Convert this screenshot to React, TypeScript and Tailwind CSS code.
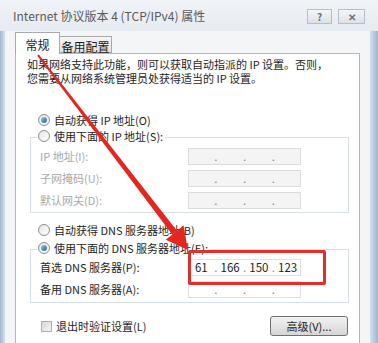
import React from 'react';

const FONT = { fontFamily: '"Noto Sans CJK SC", "Noto Sans", sans-serif' };

function Radio({ checked }: { checked?: boolean }) {
  return (
    <span className="relative flex h-[12px] w-[12px] shrink-0 items-center justify-center rounded-full border border-[#8e8f8f] bg-gradient-to-br from-[#e6e6e6] to-white">
      {checked && <span className="h-[6px] w-[6px] rounded-full bg-gradient-to-br from-[#8ad0f5] to-[#1a5fa8]" />}
    </span>
  );
}

function IpBox({ values, disabled }: { values?: string[]; disabled?: boolean }) {
  const segs = values ?? ['', '', '', ''];
  return (
    <div
      className={`flex h-[17px] w-[113px] items-center border text-[11.5px] leading-none ${
        disabled ? 'border-[#dcdcdc] bg-[#f4f4f4] text-[#b0b0b0]' : 'border-[#e0e0e0] bg-white text-[#222]'
      }`}
    >
      {segs.map((s, i) => (
        <React.Fragment key={i}>
          {i > 0 && <span className="w-[4px] text-center text-[#888]">.</span>}
          <span className="flex-1 text-center">{s}</span>
        </React.Fragment>
      ))}
    </div>
  );
}

function FieldRow({ label, disabled, values }: { label: string; disabled?: boolean; values?: string[] }) {
  return (
    <div className="flex h-[17px] items-center">
      <span className={`w-[157px] pl-[9px] text-[11px] ${disabled ? 'text-[#a8a8a8]' : 'text-[#1e1e1e]'}`}>{label}</span>
      <IpBox values={values} disabled={disabled} />
    </div>
  );
}

export default function App() {
  return (
    <div className="relative h-[343px] w-[378px] overflow-hidden bg-[#c9d7e6] text-[#1e1e1e]" style={FONT}>
      {/* title bar */}
      <div className="flex h-[31px] items-center bg-gradient-to-b from-[#f0f3f7] to-[#e6ebf1] pl-[13px] pr-[13px]">
        <span className="flex-1 text-[12px] text-[#5a5a5a]">Internet 协议版本 4 (TCP/IPv4) 属性</span>
        <div className="mt-[2px] flex gap-[6px]">
          <div className="flex h-[15px] w-[25px] items-center justify-center border border-[#b8bec6] bg-gradient-to-b from-[#f4f6f8] to-[#dde2e8] text-[10px] font-bold text-[#6c7077]">
            ?
          </div>
          <div className="flex h-[15px] w-[27px] items-center justify-center border border-[#b8bec6] bg-gradient-to-b from-[#f4f6f8] to-[#dde2e8] text-[10px] font-bold text-[#6c7077]">
            ✕
          </div>
        </div>
      </div>

      {/* body between frame strips */}
      <div className="flex h-[312px]">
        <div className="w-[5px] bg-gradient-to-r from-[#9fb6cf] to-[#d3e0ee]" />
        <div className="flex w-[365px] flex-col bg-[#f3f5f7] px-[10px]">
          {/* tabs */}
          <div className="flex h-[22px] items-end">
            <div className="relative z-10 -mb-px flex h-[22px] w-[45px] items-start justify-center border border-b-0 border-[#a9a9a9] bg-white pt-[3px] text-[12px]">
              常规
            </div>
            <div className="flex h-[17px] w-[52px] items-start justify-center border border-l-0 border-[#a9a9a9] bg-gradient-to-b from-[#f6f6f6] to-[#e2e2e2] pt-[1px] text-[12px]">
              备用配置
            </div>
          </div>

          {/* panel */}
          <div className="flex flex-1 flex-col border border-b-0 border-[#b7b7b7] bg-white text-[11px]">
            <div className="mt-[3px] pl-[11px] leading-[14px]">
              <div>如果网络支持此功能，则可以获取自动指派的 IP 设置。否则，</div>
              <div>您需要从网络系统管理员处获得适当的 IP 设置。</div>
            </div>

            <div className="mt-[27px] flex h-[16px] items-center gap-[4px] pl-[22px]">
              <Radio checked />
              <span>自动获得 IP 地址(O)</span>
            </div>

            <div className="ml-[14px] mr-[10px] mt-[9px] flex flex-col border border-[#d5dfe5] pb-[3px]">
              <div className="-mt-[10px] ml-[6px] flex h-[16px] w-fit items-center gap-[4px] bg-white pl-[1px] pr-[2px]">
                <Radio />
                <span>使用下面的 IP 地址(S):</span>
              </div>
              <div className="mt-[4px] flex flex-col gap-[5px]">
                <FieldRow label="IP 地址(I):" disabled />
                <FieldRow label="子网掩码(U):" disabled />
                <FieldRow label="默认网关(D):" disabled />
              </div>
            </div>

            <div className="mt-[9px] flex h-[16px] items-center gap-[4px] pl-[22px]">
              <Radio />
              <span>自动获得 DNS 服务器地址(B)</span>
            </div>

            <div className="ml-[14px] mr-[10px] mt-[11px] flex flex-col border border-[#d5dfe5] pb-[4px]">
              <div className="-mt-[10px] ml-[6px] flex h-[16px] w-fit items-center gap-[4px] bg-white pl-[1px] pr-[2px]">
                <Radio checked />
                <span>使用下面的 DNS 服务器地址(E):</span>
              </div>
              <div className="mt-[3px] flex flex-col gap-[5px]">
                <FieldRow label="首选 DNS 服务器(P):" values={['61', '166', '150', '123']} />
                <FieldRow label="备用 DNS 服务器(A):" />
              </div>
            </div>

            <div className="mt-[13px] flex items-center pl-[25px] pr-[11px]">
              <span className="h-[11px] w-[11px] border border-[#b0b0b0] bg-gradient-to-br from-[#d8d8d8] to-[#f4f4f4]" />
              <span className="ml-[4px] flex-1">退出时验证设置(L)</span>
              <div className="flex h-[20px] w-[78px] items-center justify-center rounded-[3px] border border-[#707070] bg-gradient-to-b from-[#f2f2f2] to-[#d6d6d6]">
                高级(V)...
              </div>
            </div>
          </div>
        </div>
        <div className="w-[8px] bg-gradient-to-r from-[#d3e0ee] to-[#9fb6cf]" />
      </div>

      {/* annotation overlay */}
      <div className="pointer-events-none absolute left-[188px] top-[250px] h-[35px] w-[138px] rounded-[2px] border-[3px] border-[#e0302b]" />
      <svg className="pointer-events-none absolute left-0 top-0" width="378" height="343" viewBox="0 0 378 343">
        <polygon points="38.8,54.4 37.2,55.6 172.2,234.4 177,230.8" fill="#e3261f" />
        <polygon points="183.5,225.5 165.7,239.7 188,250" fill="#e3261f" />
      </svg>
    </div>
  );
}
